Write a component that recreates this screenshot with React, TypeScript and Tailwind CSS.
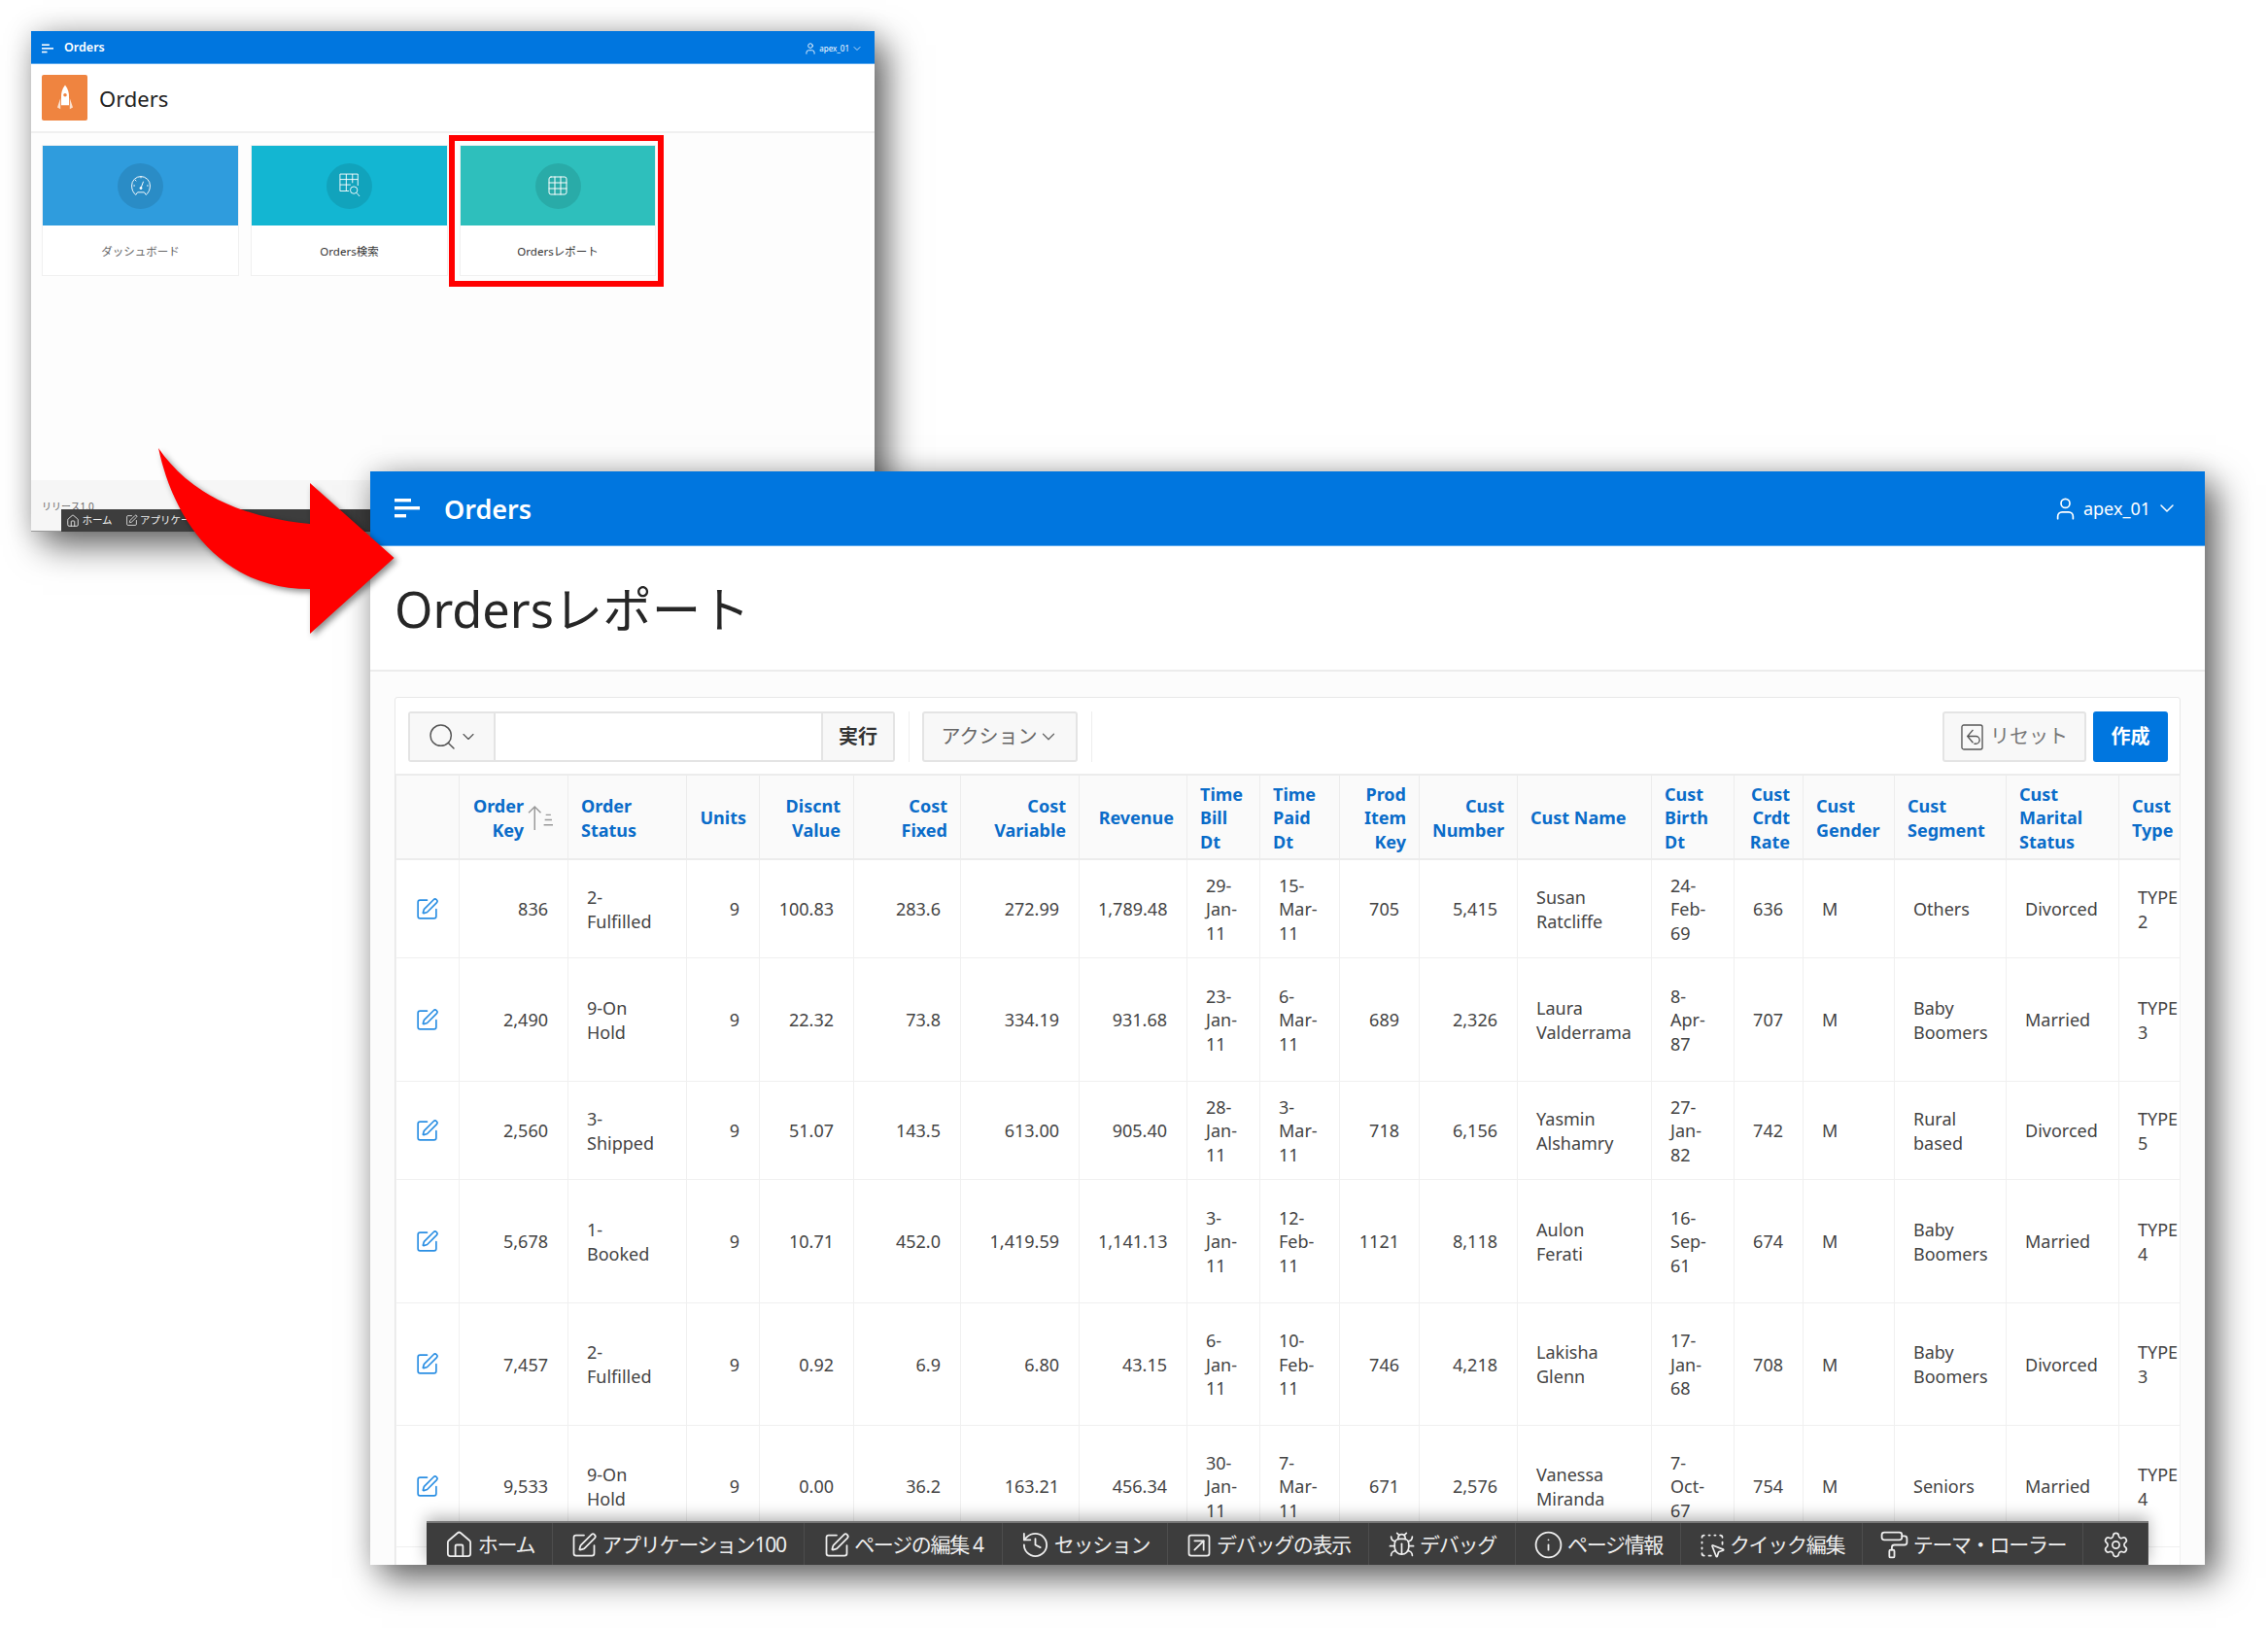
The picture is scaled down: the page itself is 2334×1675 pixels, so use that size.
import React from 'react';
import {
  Bug,
  ChevronDown,
  Grid3x3,
  History,
  House,
  Info,
  PaintRoller,
  Search,
  Settings,
  SquareArrowUpRight,
  SquareDashedMousePointer,
  SquarePen,
  User,
} from 'lucide-react';

const Bars = ({ className }: { className: string }) => (
  <svg viewBox="0 0 26 20" className={className} fill="currentColor">
    <rect x="0" y="0" width="17" height="3.4" />
    <rect x="0" y="8" width="26" height="3.4" />
    <rect x="0" y="16" width="12" height="3.4" />
  </svg>
);

const RocketIcon = () => (
  <svg viewBox="0 0 20 34" className="w-[16px] h-[28px]" fill="#fff">
    <path d="M10 0C6 5 5 10 5 15v11h10V15c0-5-1-10-5-15z" />
    <path d="M4 17L0 29l4 2zM16 17l4 12-4 2z" opacity=".75" />
    <circle cx="10" cy="13" r="2.2" fill="#ef8440" />
  </svg>
);

const GaugeIcon = () => (
  <svg viewBox="0 0 24 28" className="w-[22px] h-[24px]" fill="none" stroke="#fff" strokeWidth="1.1">
    <path d="M6 25C3 23 1 19 1 14a11 11 0 0 1 22 0c0 5-2 9-5 11l-2-3H8z" />
    <path d="M12 17l3-8M12 3v2M3 14h2M19 14h2M5 7l1.5 1.5" />
    <circle cx="12" cy="17" r="1.2" fill="#fff" />
  </svg>
);

const TableSearchIcon = () => (
  <svg viewBox="0 0 24 28" className="w-[22px] h-[26px]" fill="none" stroke="#fff" strokeWidth="1">
    <path d="M1 1h20v13M1 1v19h10M1 7h20M1 13h12M8 1v19M15 1v10" />
    <circle cx="16.5" cy="19" r="4" />
    <path d="M19.5 22l3.5 4" />
  </svg>
);

const ResetIcon = () => (
  <svg viewBox="0 0 24 28" className="w-[23px] h-[27px]" fill="none" stroke="#555" strokeWidth="1.4">
    <rect x="1" y="1" width="22" height="26" rx="2" />
    <path d="M13 6l-6 7 6 7M7 13h9a4 4 0 0 1 0 8h-2" />
  </svg>
);

const SortIcon = () => (
  <svg viewBox="0 0 28 26" className="w-[33px] h-[27px] shrink-0" fill="none" stroke="#999" strokeWidth="1.4">
    <path d="M8 25V2M2 8l6-6 6 6M19 10h5M18 15h7M17 20h9" />
  </svg>
);

const cards = [
  { label: 'ダッシュボード', w: 'w-[203px]', color: 'bg-[#2f9cdd]', text: 'text-[#666]', icon: <GaugeIcon /> },
  { label: 'Orders検索', w: 'w-[203px]', color: 'bg-[#13b6d2]', text: 'text-[#333]', icon: <TableSearchIcon /> },
  { label: 'Ordersレポート', w: 'w-[202px]', color: 'bg-[#2ebfbc]', text: 'text-[#333]', icon: <Grid3x3 size={24} strokeWidth={1} color="#fff" /> },
];

const columns = [
  { w: 'w-[65px]', label: '', align: 'text-left' },
  { w: 'w-[112px]', label: 'Order\nKey', align: 'text-right', sort: true },
  { w: 'w-[122px]', label: 'Order\nStatus', align: 'text-left' },
  { w: 'w-[75px]', label: 'Units', align: 'text-right' },
  { w: 'w-[97px]', label: 'Discnt\nValue', align: 'text-right' },
  { w: 'w-[110px]', label: 'Cost\nFixed', align: 'text-right' },
  { w: 'w-[122px]', label: 'Cost\nVariable', align: 'text-right' },
  { w: 'w-[111px]', label: 'Revenue', align: 'text-right' },
  { w: 'w-[75px]', label: 'Time\nBill\nDt', align: 'text-left' },
  { w: 'w-[82px]', label: 'Time\nPaid\nDt', align: 'text-left' },
  { w: 'w-[82px]', label: 'Prod\nItem\nKey', align: 'text-right' },
  { w: 'w-[101px]', label: 'Cust\nNumber', align: 'text-right' },
  { w: 'w-[138px]', label: 'Cust Name', align: 'text-left' },
  { w: 'w-[85px]', label: 'Cust\nBirth\nDt', align: 'text-left' },
  { w: 'w-[71px]', label: 'Cust\nCrdt\nRate', align: 'text-right' },
  { w: 'w-[94px]', label: 'Cust\nGender', align: 'text-left' },
  { w: 'w-[115px]', label: 'Cust\nSegment', align: 'text-left' },
  { w: 'w-[116px]', label: 'Cust\nMarital\nStatus', align: 'text-left' },
  { w: 'w-[63px]', label: 'Cust\nType', align: 'text-left' },
];

const rows = [
  { h: 'h-[101px]', cells: ['836', '2-\nFulfilled', '9', '100.83', '283.6', '272.99', '1,789.48', '29-\nJan-\n11', '15-\nMar-\n11', '705', '5,415', 'Susan\nRatcliffe', '24-\nFeb-\n69', '636', 'M', 'Others', 'Divorced', 'TYPE\n2'] },
  { h: 'h-[127px]', cells: ['2,490', '9-On\nHold', '9', '22.32', '73.8', '334.19', '931.68', '23-\nJan-\n11', '6-\nMar-\n11', '689', '2,326', 'Laura\nValderrama', '8-\nApr-\n87', '707', 'M', 'Baby\nBoomers', 'Married', 'TYPE\n3'] },
  { h: 'h-[101px]', cells: ['2,560', '3-\nShipped', '9', '51.07', '143.5', '613.00', '905.40', '28-\nJan-\n11', '3-\nMar-\n11', '718', '6,156', 'Yasmin\nAlshamry', '27-\nJan-\n82', '742', 'M', 'Rural\nbased', 'Divorced', 'TYPE\n5'] },
  { h: 'h-[127px]', cells: ['5,678', '1-\nBooked', '9', '10.71', '452.0', '1,419.59', '1,141.13', '3-\nJan-\n11', '12-\nFeb-\n11', '1121', '8,118', 'Aulon\nFerati', '16-\nSep-\n61', '674', 'M', 'Baby\nBoomers', 'Married', 'TYPE\n4'] },
  { h: 'h-[126px]', cells: ['7,457', '2-\nFulfilled', '9', '0.92', '6.9', '6.80', '43.15', '6-\nJan-\n11', '10-\nFeb-\n11', '746', '4,218', 'Lakisha\nGlenn', '17-\nJan-\n68', '708', 'M', 'Baby\nBoomers', 'Divorced', 'TYPE\n3'] },
  { h: 'h-[125px]', cells: ['9,533', '9-On\nHold', '9', '0.00', '36.2', '163.21', '456.34', '30-\nJan-\n11', '7-\nMar-\n11', '671', '2,576', 'Vanessa\nMiranda', '7-\nOct-\n67', '754', 'M', 'Seniors', 'Married', 'TYPE\n4'] },
];

const devItems = [
  { w: 'w-[130px]', label: 'ホーム', icon: <House size={31} strokeWidth={1.4} /> },
  { w: 'w-[259px]', label: 'アプリケーション100', icon: <SquarePen size={28} strokeWidth={1.5} /> },
  { w: 'w-[204px]', label: 'ページの編集 4', icon: <SquarePen size={28} strokeWidth={1.5} /> },
  { w: 'w-[170px]', label: 'セッション', icon: <History size={31} strokeWidth={1.4} /> },
  { w: 'w-[207px]', label: 'デバッグの表示', icon: <SquareArrowUpRight size={28} strokeWidth={1.5} /> },
  { w: 'w-[151px]', label: 'デバッグ', icon: <Bug size={29} strokeWidth={1.4} /> },
  { w: 'w-[170px]', label: 'ページ情報', icon: <Info size={31} strokeWidth={1.4} /> },
  { w: 'w-[187px]', label: 'クイック編集', icon: <SquareDashedMousePointer size={28} strokeWidth={1.5} /> },
  { w: 'w-[227px]', label: 'テーマ・ローラー', icon: <PaintRoller size={31} strokeWidth={1.4} /> },
  { w: 'w-[67px]', label: '', icon: <Settings size={29} strokeWidth={1.4} /> },
];

const SmallWindow = () => (
  <div className="absolute left-[32px] top-[32px] w-[868px] h-[515px] flex flex-col bg-[#fdfdfd] shadow-[12px_14px_34px_rgba(0,0,0,0.6),0_0_26px_rgba(0,0,0,0.14)]">
    <div className="h-[34px] shrink-0 flex items-center justify-between pl-[11px] pr-[12px] pt-[2px] bg-[#0076df] border-b border-[#5aa8ee] text-white">
      <div className="flex items-center gap-[11px]">
        <Bars className="w-[12px] h-[10px]" />
        <span className="text-[12.5px] font-semibold">Orders</span>
      </div>
      <div className="flex items-center gap-[2px] text-[8px]">
        <User size={14} strokeWidth={1.5} />
        <span>apex_01</span>
        <ChevronDown size={12} strokeWidth={1.5} />
      </div>
    </div>
    <div className="h-[71px] shrink-0 flex items-center gap-[12px] pl-[11px] bg-white border-b-2 border-[#f0f0f0]">
      <div className="w-[47px] h-[47px] rounded-[2px] bg-[#ef8440] flex items-center justify-center">
        <RocketIcon />
      </div>
      <span className="text-[22px] pt-[2px] text-[#222]">Orders</span>
    </div>
    <div className="flex gap-[12px] pl-[11px] pt-[12px]">
      {cards.map((card) => (
        <div key={card.label} className={`h-[135px] bg-white border border-[#f0f0f0] flex flex-col ${card.w}`}>
          <div className={`h-[82px] flex items-center justify-center ${card.color}`}>
            <div className="w-[47px] h-[47px] rounded-full bg-black/10 flex items-center justify-center">{card.icon}</div>
          </div>
          <div className={`flex-1 flex items-center justify-center pt-[2px] text-[11.5px] ${card.text}`}>{card.label}</div>
        </div>
      ))}
    </div>
    <div className="mt-auto h-[53px] pl-[11px] pt-[20px] bg-[#f6f6f6] text-[10px] text-[#666] border-b border-[#999]">リリース1.0</div>
  </div>
);

const SmallDevBar = () => (
  <div className="absolute left-[63px] top-[524px] w-[330px] h-[23px] flex items-center bg-[#3d3d3d] text-[#eee] text-[10.5px]">
    <div className="w-[58px] flex items-center justify-center gap-[2px]">
      <House size={14} strokeWidth={1.5} />
      ホーム
    </div>
    <div className="flex items-center gap-[2px] pl-[8px]">
      <SquarePen size={13} strokeWidth={1.5} />
      アプリケーション100
    </div>
  </div>
);

const Highlight = () => (
  <div className="absolute left-[462px] top-[139px] w-[221px] h-[156px] border-[6px] border-[#ff0000]" />
);

const Arrow = () => (
  <svg viewBox="0 0 420 670" className="absolute left-0 top-0 w-[420px] h-[670px] drop-shadow-[3px_3px_3px_rgba(0,0,0,0.45)]">
    <path d="M163 461C190 500 235 531 319 539V497L405.6 574L319 652V606C230 606 180 540 163 461Z" fill="#ff0000" />
  </svg>
);

const Toolbar = () => (
  <div className="h-[78px] flex items-start pt-[14px] pl-[13px] pr-[12px] text-[20px]">
    <div className="h-[52px] w-[501px] flex border-2 border-[#e4e4e4] rounded-[3px] bg-white">
      <div className="w-[88px] flex items-center justify-center gap-[1px] bg-[#f8f8f8] border-r-2 border-[#e4e4e4] text-[#555]">
        <Search size={32} strokeWidth={1.1} />
        <ChevronDown size={20} strokeWidth={1.4} />
      </div>
      <div className="flex-1" />
      <div className="w-[74px] flex items-center justify-center bg-[#f8f8f8] border-l-2 border-[#e4e4e4] font-bold text-[#333]">実行</div>
    </div>
    <div className="ml-[14px] h-[52px] border-l border-[#eee]" />
    <div className="ml-[13px] h-[52px] w-[160px] flex items-center justify-center gap-0 border-2 border-[#e4e4e4] rounded-[3px] bg-[#f8f8f8] text-[#666]">
      アクション
      <ChevronDown size={22} strokeWidth={1.4} />
    </div>
    <div className="ml-[14px] h-[52px] border-l border-[#eee]" />
    <div className="ml-auto h-[52px] w-[148px] flex items-center justify-center gap-[7px] border-2 border-[#e4e4e4] rounded-[3px] bg-[#f8f8f8] text-[#777]">
      <ResetIcon />
      リセット
    </div>
    <div className="ml-[7px] h-[52px] w-[77px] flex items-center justify-center rounded-[3px] bg-[#0076df] font-bold text-white">作成</div>
  </div>
);

const ReportTable = () => (
  <table className="w-[1836px] table-fixed border-collapse text-[18px] leading-[24.6px] text-[#444]">
    <colgroup>
      {columns.map((col, i) => (
        <col key={i} className={col.w} />
      ))}
    </colgroup>
    <thead>
      <tr className="h-[87px] bg-[#fafafa] border-y-2 border-[#ececec]">
        {columns.map((col, i) => (
          <th key={i} className={`px-[13px] pt-[2px] border-x border-[#ececec] font-bold whitespace-pre-line text-[#0a6cc9] ${col.align}`}>
            {col.sort ? (
              <div className="flex items-center justify-end gap-[1px] -mr-[2px]">
                <span>{col.label}</span>
                <SortIcon />
              </div>
            ) : (
              col.label
            )}
          </th>
        ))}
      </tr>
    </thead>
    <tbody>
      {rows.map((row, r) => (
        <tr key={r} className={`${row.h} border-b border-[#f0f0f0]`}>
          <td className="border-x border-[#f0f0f0] pr-[2px] text-center">
            <SquarePen size={25} strokeWidth={1.6} color="#2b8fe3" className="inline-block" />
          </td>
          {row.cells.map((cell, c) => (
            <td key={c} className={`pl-[19px] pr-[20px] pt-[2px] border-x border-[#f0f0f0] whitespace-pre-line ${columns[c + 1].align}`}>
              {cell}
            </td>
          ))}
        </tr>
      ))}
      <tr className="h-[40px]">
        {columns.map((_, i) => (
          <td key={i} className="border-x border-[#f0f0f0]" />
        ))}
      </tr>
    </tbody>
  </table>
);

const DevBar = () => (
  <div className="absolute left-[58px] bottom-0 h-[45px] flex bg-[#3d3d3d] border-t-2 border-[#777] text-[#eee] text-[21px] tracking-[-1.3px] shadow-[0_-4px_16px_rgba(0,0,0,0.3)]">
    {devItems.map((item, i) => (
      <div key={i} className={`flex items-center justify-center gap-[4px] pt-[2px] border-r border-[#4d4d4d] whitespace-nowrap ${item.w}`}>
        {item.icon}
        {item.label}
      </div>
    ))}
  </div>
);

const ReportWindow = () => (
  <div className="absolute left-[381px] top-[485px] w-[1888px] h-[1125px] flex flex-col overflow-hidden bg-[#fcfcfc]">
    <div className="h-[77px] shrink-0 flex items-center justify-between pl-[25px] pr-[27px] bg-[#0076df] border-b border-[#5aa8ee] text-white">
      <div className="flex items-center gap-[25px]">
        <Bars className="w-[26px] h-[20px]" />
        <span className="text-[27px] pt-[3px] font-semibold">Orders</span>
      </div>
      <div className="flex items-center gap-[5px] text-[18px]">
        <User size={27} strokeWidth={1.5} />
        <span>apex_01</span>
        <ChevronDown size={24} strokeWidth={1.5} />
      </div>
    </div>
    <div className="h-[129px] shrink-0 flex items-center pl-[25px] pt-[3px] bg-white border-b-2 border-[#ececec]">
      <h1 className="text-[50.5px] text-[#262626]">Ordersレポート</h1>
    </div>
    <div className="flex-1 min-h-0 pl-[25px] pr-[25px] pt-[26px]">
      <div className="w-[1838px] bg-white border border-[#e8e8e8] rounded-t-[3px]">
        <Toolbar />
        <ReportTable />
      </div>
    </div>
    <DevBar />
  </div>
);

export default function App() {
  return (
    <div className="relative w-[2334px] h-[1675px] overflow-hidden bg-white font-['Noto_Sans','Noto_Sans_CJK_JP',sans-serif]">
      <SmallWindow />
      <SmallDevBar />
      <Highlight />
      <div className="absolute left-[381px] top-[485px] w-[1888px] h-[1125px] shadow-[12px_14px_34px_rgba(0,0,0,0.6),0_0_26px_rgba(0,0,0,0.14)]" />
      <ReportWindow />
      <Arrow />
    </div>
  );
}
